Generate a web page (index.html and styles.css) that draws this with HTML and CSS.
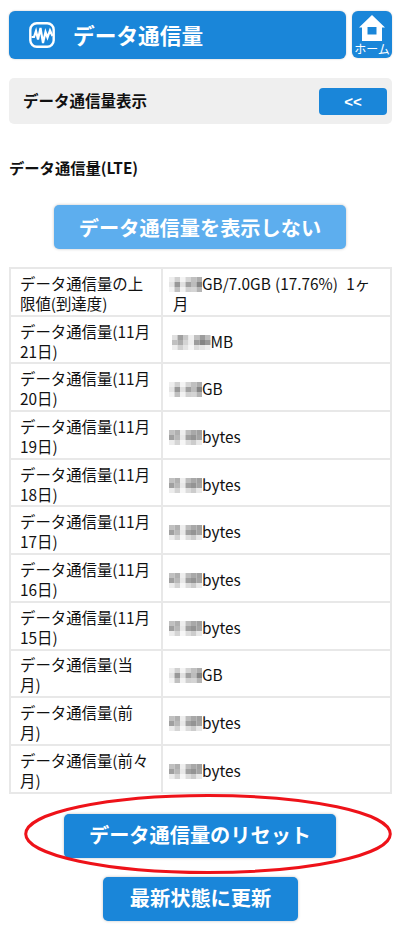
FILE: index.html
```html
<!DOCTYPE html>
<html lang="ja">
<head>
<meta charset="utf-8">
<title>データ通信量</title>
<link rel="stylesheet" href="styles.css">
</head>
<body>
<svg class="defs" width="0" height="0" aria-hidden="true">
  <defs>
    <g id="mg">
      <rect x="0" y="0" width="5.5" height="5" fill="#eeeeee"/><rect x="5.5" y="0" width="5.5" height="5" fill="#d0d0d0"/><rect x="11" y="0" width="5.5" height="5" fill="#f4f4f4"/><rect x="16.5" y="0" width="5.5" height="5" fill="#d4d4d4"/><rect x="22" y="0" width="5.5" height="5" fill="#c0c0c0"/><rect x="27.5" y="0" width="5.5" height="5" fill="#acacac"/>
      <rect x="0" y="5" width="5.5" height="5" fill="#e4e4e4"/><rect x="5.5" y="5" width="5.5" height="5" fill="#989898"/><rect x="11" y="5" width="5.5" height="5" fill="#e0e0e0"/><rect x="16.5" y="5" width="5.5" height="5" fill="#a0a0a0"/><rect x="22" y="5" width="5.5" height="5" fill="#bcbcbc"/><rect x="27.5" y="5" width="5.5" height="5" fill="#848484"/>
      <rect x="0" y="10" width="5.5" height="5" fill="#f4f4f4"/><rect x="5.5" y="10" width="5.5" height="5" fill="#c0c0c0"/><rect x="11" y="10" width="5.5" height="5" fill="#f2f2f2"/><rect x="16.5" y="10" width="5.5" height="5" fill="#d0d0d0"/><rect x="22" y="10" width="5.5" height="5" fill="#d4d4d4"/><rect x="27.5" y="10" width="5.5" height="5" fill="#b4b4b4"/>
    </g>
    <g id="mb">
      <rect x="0" y="0" width="5.5" height="5" fill="#c0c0c0"/><rect x="5.5" y="0" width="5.5" height="5" fill="#b0b0b0"/><rect x="11" y="0" width="5.5" height="5" fill="#eeeeee"/><rect x="16.5" y="0" width="5.5" height="5" fill="#bcbcbc"/><rect x="22" y="0" width="5.5" height="5" fill="#a8a8a8"/><rect x="27.5" y="0" width="5.5" height="5" fill="#a0a0a0"/>
      <rect x="0" y="5" width="5.5" height="5" fill="#a0a0a0"/><rect x="5.5" y="5" width="5.5" height="5" fill="#b8b8b8"/><rect x="11" y="5" width="5.5" height="5" fill="#e8e8e8"/><rect x="16.5" y="5" width="5.5" height="5" fill="#a0a0a0"/><rect x="22" y="5" width="5.5" height="5" fill="#949494"/><rect x="27.5" y="5" width="5.5" height="5" fill="#a4a4a4"/>
      <rect x="0" y="10" width="5.5" height="5" fill="#ececec"/><rect x="5.5" y="10" width="5.5" height="5" fill="#d4d4d4"/><rect x="11" y="10" width="5.5" height="5" fill="#f6f6f6"/><rect x="16.5" y="10" width="5.5" height="5" fill="#dcdcdc"/><rect x="22" y="10" width="5.5" height="5" fill="#cccccc"/><rect x="27.5" y="10" width="5.5" height="5" fill="#e8e8e8"/>
    </g>
    <g id="mm">
      <rect x="0" y="0" width="5.5" height="5" fill="#e0e0e0"/><rect x="5.5" y="0" width="5.5" height="5" fill="#a0a0a0"/><rect x="11" y="0" width="5.5" height="5" fill="#c8c8c8"/><rect x="16.5" y="0" width="5.5" height="5" fill="#f0f0f0"/><rect x="22" y="0" width="5.5" height="5" fill="#c0c0c0"/><rect x="27.5" y="0" width="5.5" height="5" fill="#9c9c9c"/><rect x="33" y="0" width="5.5" height="5" fill="#bcbcbc"/>
      <rect x="0" y="5" width="5.5" height="5" fill="#c0c0c0"/><rect x="5.5" y="5" width="5.5" height="5" fill="#acacac"/><rect x="11" y="5" width="5.5" height="5" fill="#d4d4d4"/><rect x="16.5" y="5" width="5.5" height="5" fill="#eeeeee"/><rect x="22" y="5" width="5.5" height="5" fill="#9c9c9c"/><rect x="27.5" y="5" width="5.5" height="5" fill="#848484"/><rect x="33" y="5" width="5.5" height="5" fill="#989898"/>
      <rect x="0" y="10" width="5.5" height="5" fill="#eeeeee"/><rect x="5.5" y="10" width="5.5" height="5" fill="#d0d0d0"/><rect x="11" y="10" width="5.5" height="5" fill="#e4e4e4"/><rect x="16.5" y="10" width="5.5" height="5" fill="#f6f6f6"/><rect x="22" y="10" width="5.5" height="5" fill="#dcdcdc"/><rect x="27.5" y="10" width="5.5" height="5" fill="#e4e4e4"/><rect x="33" y="10" width="5.5" height="5" fill="#eeeeee"/>
    </g>
  </defs>
</svg>
<main class="page">
  <header class="top">
    <div class="title">
      <svg class="wave" viewBox="0 0 26 26" width="26" height="26" aria-hidden="true">
        <rect x="1.3" y="1.3" width="23.4" height="23.4" rx="6.5" fill="none" stroke="#fff" stroke-width="2.4"/>
        <path d="M2.5 15 L5 15 L7 9 L9 17.5 L11.5 6 L14 21 L16.5 10 L18.5 15.5 L21 8.5 L23.5 14" fill="none" stroke="#fff" stroke-width="2.2"/>
      </svg>
      <span>データ通信量</span>
    </div>
    <div class="home">
      <svg viewBox="0 0 26 26" width="26" height="26" aria-hidden="true">
        <path fill-rule="evenodd" fill="#fff" d="M13 0 L26 12.5 L23 12.5 L23 26 L3 26 L3 12.5 L0 12.5 Z M8.5 12 L8.5 19.5 L17.5 19.5 L17.5 12 Z"/>
      </svg>
      <span>ホーム</span>
    </div>
  </header>

  <section class="panel">
    <strong>データ通信量表示</strong>
    <button class="toggle">&lt;&lt;</button>
  </section>

  <h2 class="sub">データ通信量(LTE)</h2>

  <div class="center first">
    <button class="btn light wide">データ通信量を表示しない</button>
  </div>

  <table class="data">
    <tr><td class="k">データ通信量の上限値(到達度)</td><td class="v"><svg class="blur" viewBox="0 0 33 15"><use href="#mg"/></svg>GB/7.0GB (17.76%)&nbsp; 1ヶ月</td></tr>
    <tr><td class="k">データ通信量(11月21日)</td><td class="v"><svg class="blur mbw" viewBox="0 0 38.5 15"><use href="#mm"/></svg>MB</td></tr>
    <tr><td class="k">データ通信量(11月20日)</td><td class="v"><svg class="blur" viewBox="0 0 33 15"><use href="#mg"/></svg>GB</td></tr>
    <tr><td class="k">データ通信量(11月19日)</td><td class="v"><svg class="blur" viewBox="0 0 33 15"><use href="#mb"/></svg>bytes</td></tr>
    <tr><td class="k">データ通信量(11月18日)</td><td class="v"><svg class="blur" viewBox="0 0 33 15"><use href="#mb"/></svg>bytes</td></tr>
    <tr><td class="k">データ通信量(11月17日)</td><td class="v"><svg class="blur" viewBox="0 0 33 15"><use href="#mb"/></svg>bytes</td></tr>
    <tr><td class="k">データ通信量(11月16日)</td><td class="v"><svg class="blur" viewBox="0 0 33 15"><use href="#mb"/></svg>bytes</td></tr>
    <tr><td class="k">データ通信量(11月15日)</td><td class="v"><svg class="blur" viewBox="0 0 33 15"><use href="#mb"/></svg>bytes</td></tr>
    <tr><td class="k">データ通信量(当月)</td><td class="v"><svg class="blur" viewBox="0 0 33 15"><use href="#mg"/></svg>GB</td></tr>
    <tr><td class="k">データ通信量(前月)</td><td class="v"><svg class="blur" viewBox="0 0 33 15"><use href="#mb"/></svg>bytes</td></tr>
    <tr><td class="k">データ通信量(前々月)</td><td class="v"><svg class="blur" viewBox="0 0 33 15"><use href="#mb"/></svg>bytes</td></tr>
  </table>

  <div class="center reset">
    <button class="btn wide2">データ通信量のリセット</button>
    <svg class="ring" viewBox="0 0 368 80" width="368" height="80" aria-hidden="true">
      <ellipse cx="184" cy="40" rx="182.3" ry="38.5" fill="none" stroke="#ee1219" stroke-width="3"/>
    </svg>
  </div>

  <div class="center last">
    <button class="btn narrow">最新状態に更新</button>
  </div>
</main>
</body>
</html>
```
FILE: styles.css
```css
* { box-sizing: border-box; }
html, body { margin: 0; padding: 0; background: #fff; }
body {
  font-family: "Noto Sans CJK JP", "Noto Sans", sans-serif;
  color: #111;
}
.defs { position: absolute; }
.page { width: 400px; height: 935px; padding: 11px 8px 0 9px; overflow: hidden; }

.top { display: flex; gap: 6px; align-items: flex-start; }
.title {
  width: 337px; height: 48px; background: #1a86d9; border-radius: 6px;
  box-shadow: 0 0 2px rgba(0,0,0,.25);
  display: flex; align-items: center; padding-left: 20px; gap: 18px;
  color: #fff; font-size: 21.7px; font-weight: 700; line-height: 1;
}
.home {
  width: 40px; height: 47px; background: #1a86d9; border-radius: 6px;
  box-shadow: 0 0 2px rgba(0,0,0,.2);
  display: flex; flex-direction: column; align-items: center; padding-top: 4px;
  color: #fff; font-size: 12px; line-height: 14px;
}
.home span { white-space: nowrap; margin-top: 1px; }

.panel {
  margin-top: 19px; height: 46px; width: 383px; background: #efefef; border-radius: 5px;
  display: flex; align-items: center; justify-content: space-between;
  padding: 0 5px 0 14px; font-size: 15.5px; line-height: 1;
}
.toggle {
  width: 68px; height: 27px; border: 0; border-radius: 4px; background: #1a86d9;
  color: #fff; font: 700 15px/1 "Liberation Sans", sans-serif; padding: 0;
}
.sub { margin: 33px 0 0; font-size: 15.3px; font-weight: 700; line-height: 20px; }

.center { display: flex; justify-content: center; }
.first { margin-top: 28px; justify-content: flex-start; padding-left: 45px; }
.btn {
  height: 44px; border: 0; border-radius: 5px; background: #1a86d9; color: #fff;
  font-family: inherit; font-size: 20.2px; font-weight: 700; line-height: 1; padding: 0;
  box-shadow: 0 0 3px rgba(0,0,0,.25);
}
.light { background: #5daeee; padding-top: 2px; }
.wide { width: 292px; }
.wide2 { width: 272px; }
.narrow { width: 195px; }

.data {
  margin-top: 18px; width: 383px; border-collapse: collapse; table-layout: fixed;
  font-size: 15.4px; line-height: 20px; word-spacing: .7px;
}
.data tr { height: 47.7px; }
.data td { border: 2px solid #e8e8e8; padding: 2px 9px 0; vertical-align: middle; }
.k { width: 152px; }
.data td.v { padding-left: 10px; }
.blur { display: inline-block; width: 33px; height: 15px; margin-left: -4px; vertical-align: -2px; }
.blur.mbw { width: 38.5px; margin-left: -1px; }

.reset { position: relative; margin-top: 20px; justify-content: flex-start; padding-left: 55px; }
.ring { position: absolute; left: 15px; top: -20px; }
.last { margin-top: 19px; justify-content: flex-start; padding-left: 94px; }
```
